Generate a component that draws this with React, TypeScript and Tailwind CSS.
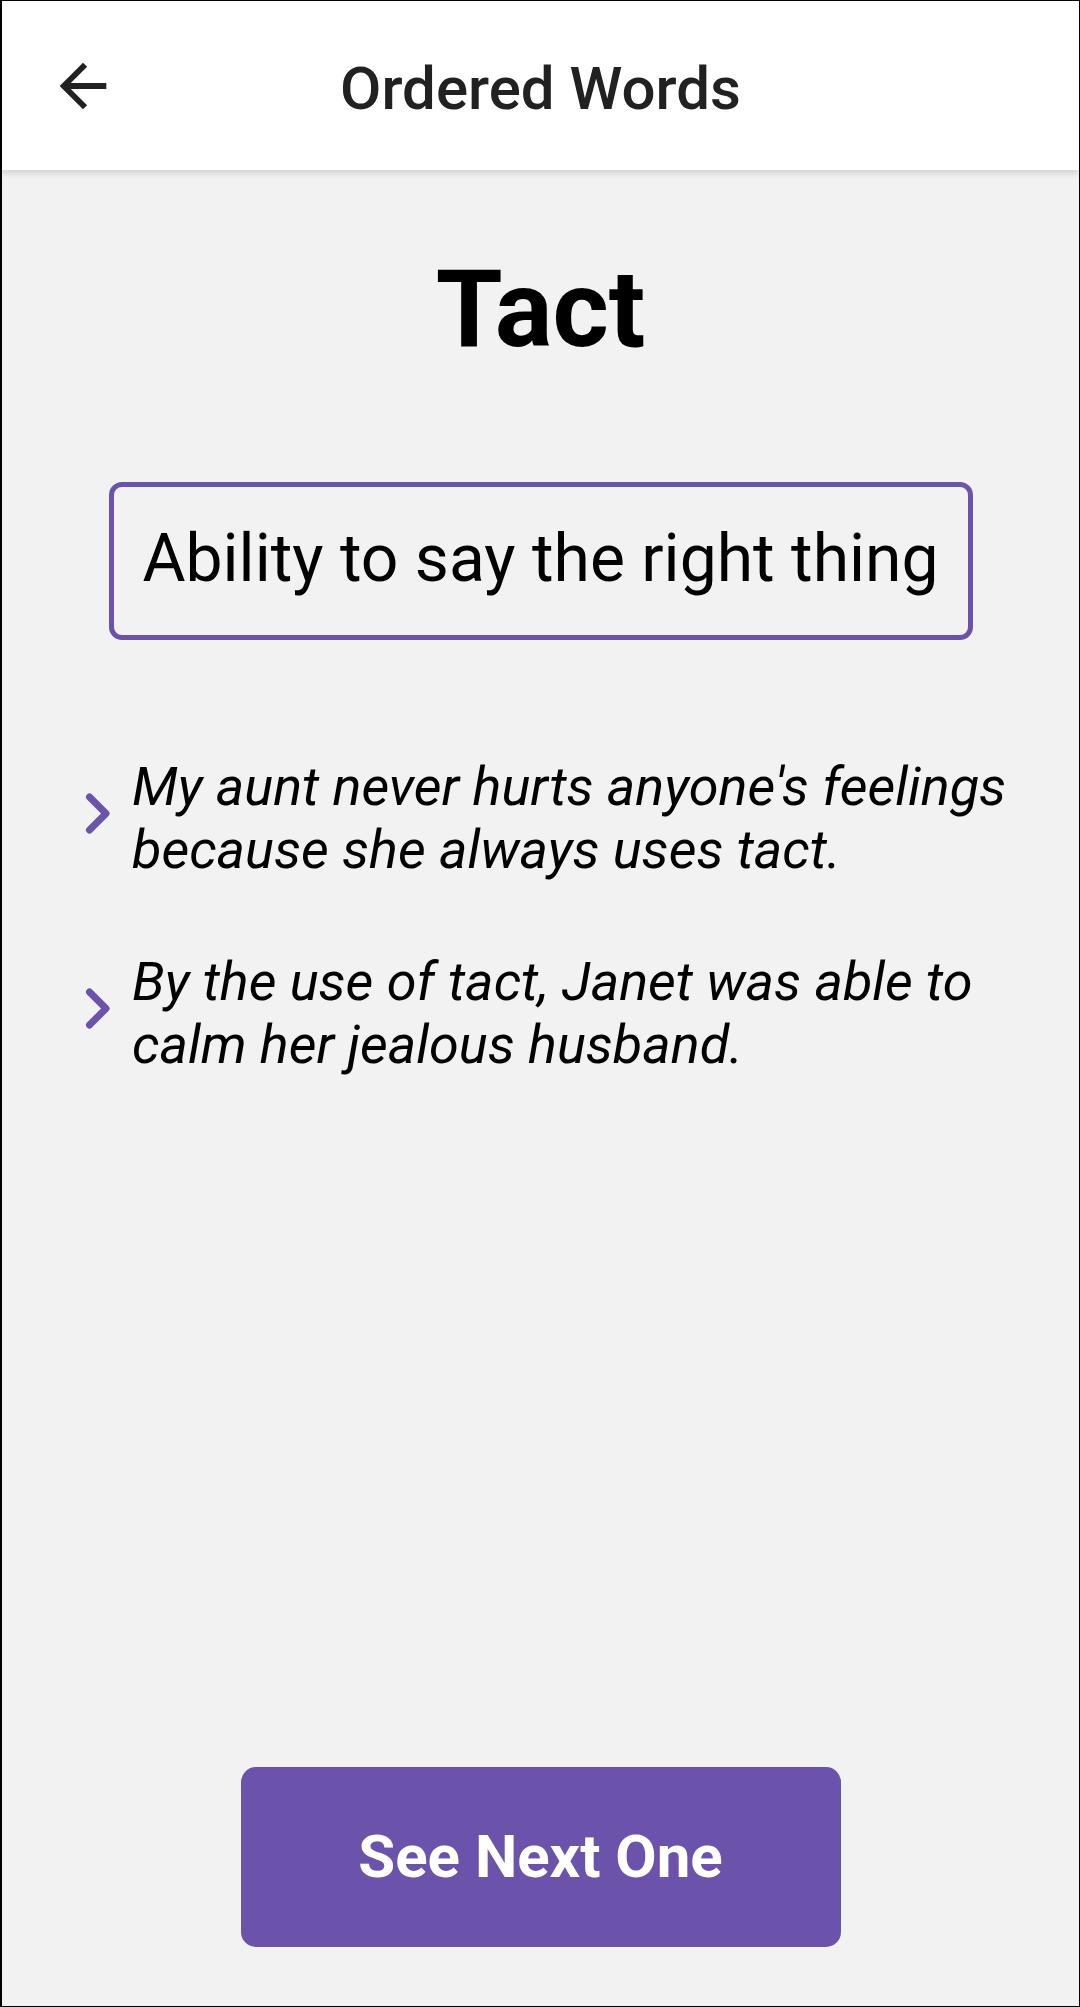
const examples = [
  "My aunt never hurts anyone's feelings because she always uses tact.",
  'By the use of tact, Janet was able to calm her jealous husband.',
];

const Chevron = () => (
  <svg width="28" height="44" viewBox="0 0 28 44" className="shrink-0 mb-[8px]">
    <polyline
      points="5.5,5 22,21.5 5.5,38"
      fill="none"
      stroke="#6b53ab"
      strokeWidth="7"
      strokeLinecap="round"
      strokeLinejoin="round"
    />
  </svg>
);

const BackArrow = () => (
  <svg width="70" height="70" viewBox="0 0 24 24" fill="#212121">
    <path d="M20 11H7.83l5.59-5.59L12 4l-8 8 8 8 1.41-1.41L7.83 13H20v-2z" />
  </svg>
);

export default function App() {
  return (
    <div className="w-[1080px] h-[2007px] flex flex-col bg-[#f2f2f2] border-l-2 border-t border-r border-b border-black font-['Roboto',sans-serif] overflow-hidden">
      <header className="relative z-10 h-[169px] shrink-0 bg-white shadow-[0_2px_8px_rgba(0,0,0,0.18)] grid grid-cols-[1fr_auto_1fr] items-center">
        <div className="pl-[46px]">
          <BackArrow />
        </div>
        <h1 className="mt-[6px] text-[60px] leading-[70px] font-medium text-[#212121]">Ordered Words</h1>
        <div />
      </header>

      <main className="flex-1 flex flex-col items-center">
        <h2 className="mt-[85px] text-[108px] leading-[108px] font-bold text-black">Tact</h2>

        <div className="mt-[119px] w-[864px] border-[5px] border-[#6b53ab] rounded-[13px] pt-[33px] pb-[37px] text-center">
          <p className="text-[66px] leading-[78px] text-black whitespace-nowrap">Ability to say the right thing</p>
        </div>

        <ul className="mt-[115px] w-full flex flex-col gap-[69px] pl-[82px] pr-[30px]">
          {examples.map((s) => (
            <li key={s} className="flex items-center gap-[20px]">
              <Chevron />
              <p className="italic text-[54px] leading-[63px] text-black">{s}</p>
            </li>
          ))}
        </ul>

        <button className="mt-auto mb-[59px] w-[600px] h-[180px] rounded-[15px] bg-[#6b53ab] text-white text-[60px] font-bold">
          See Next One
        </button>
      </main>
    </div>
  );
}
